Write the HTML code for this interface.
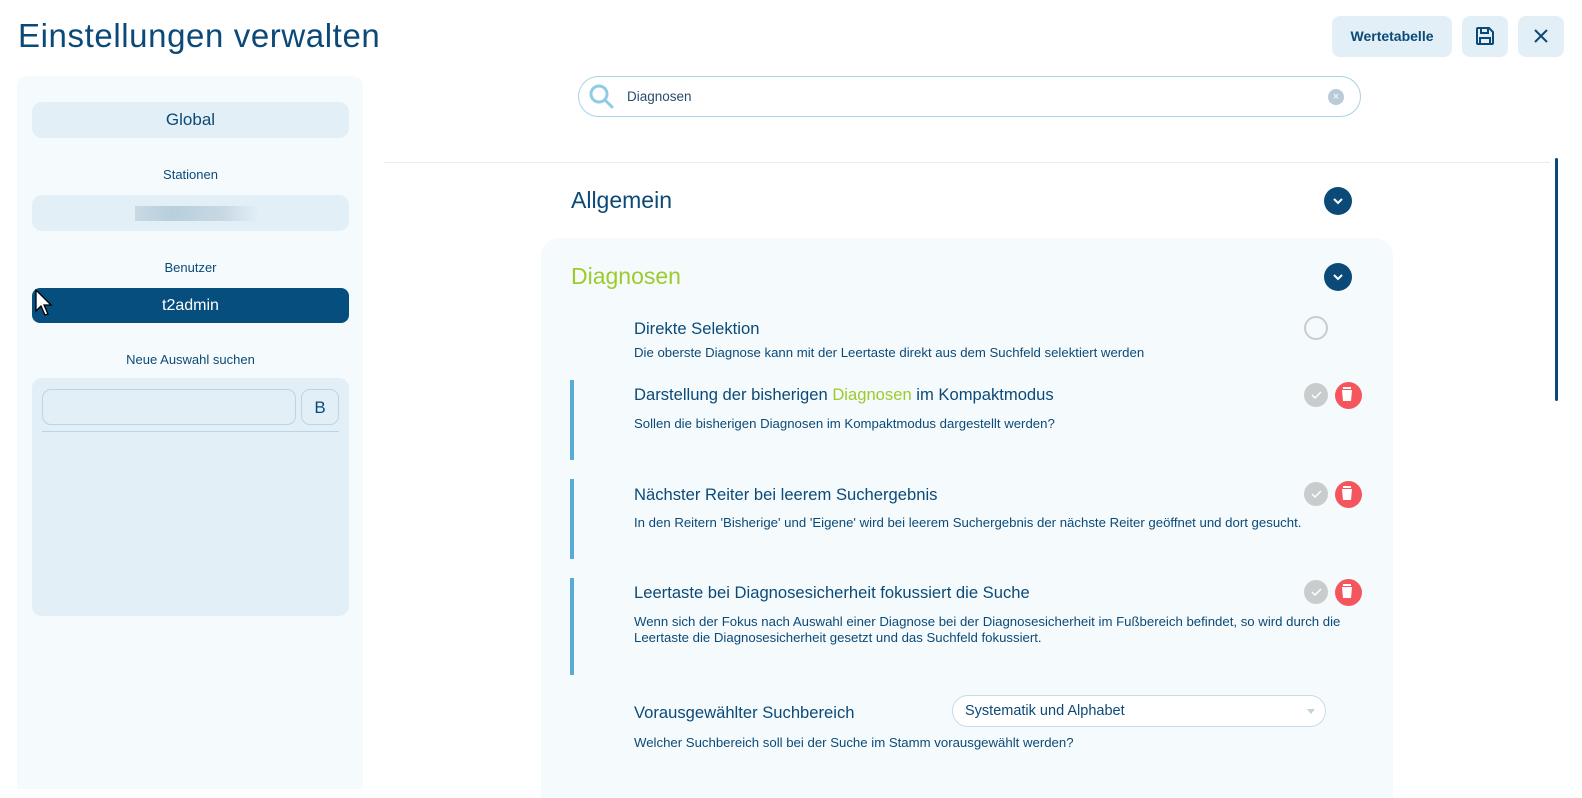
<!DOCTYPE html>
<html><head><meta charset="utf-8"><style>
*{box-sizing:border-box;margin:0;padding:0}
body{width:1582px;height:789px;overflow:hidden;background:#fff;font-family:"Liberation Sans",sans-serif;color:#0b4a78;position:relative}
.a{position:absolute}
.btn{background:#e3eff6;border-radius:8px}
.t{white-space:nowrap}
.h{font-size:16.6px}
.d{font-size:13.2px}
.bar{position:absolute;left:570px;width:4px;background:#5aaad6}
.chk{width:24px;height:24px;border-radius:50%;background:#c9cccd}
.del{width:27px;height:27px;border-radius:50%;background:#f5565e}
.chev{width:28px;height:28px;border-radius:50%;background:#0b4a78}
</style></head><body>
<div class="a t" style="left:18px;top:17px;font-size:33px;letter-spacing:0.6px;color:#0b4a78">Einstellungen verwalten</div>
<div class="a btn t" style="left:1332px;top:16px;width:120px;height:41px;font-size:14px;font-weight:bold;line-height:41px;text-align:center">Wertetabelle</div>
<div class="a btn" style="left:1462px;top:16px;width:46px;height:41px">
<svg class="a" style="left:13px;top:10px" width="20" height="20" viewBox="0 0 20 20" fill="none" stroke="#0b4a78" stroke-width="2"><path d="M2 3a1 1 0 0 1 1-1h11l4 4v11a1 1 0 0 1-1 1H3a1 1 0 0 1-1-1z"/><path d="M6 2v5h7V2M5 18v-6h10v6"/></svg></div>
<div class="a btn" style="left:1518px;top:16px;width:46px;height:41px">
<svg class="a" style="left:15px;top:12px" width="16" height="16" viewBox="0 0 16 16" stroke="#0b4a78" stroke-width="2"><path d="M2 2l12 12M14 2L2 14"/></svg></div>

<div class="a" style="left:17px;top:76px;width:346px;height:713px;background:#f5fafd;border-radius:10px 10px 0 0"></div>
<div class="a btn t" style="left:32px;top:102px;width:317px;height:36px;border-radius:10px;text-align:center;line-height:36px;font-size:17px">Global</div>
<div class="a t" style="left:32px;top:167px;width:317px;text-align:center;font-size:13px">Stationen</div>
<div class="a btn" style="left:32px;top:195px;width:317px;height:36px;border-radius:10px"></div>
<div class="a" style="left:135px;top:206px;width:124px;height:15px;background:linear-gradient(90deg,#c8d9e4,#b9cfdc 30%,#c7d8e3 70%,#e3eff6)"></div>
<div class="a t" style="left:32px;top:260px;width:317px;text-align:center;font-size:13px">Benutzer</div>
<div class="a t" style="left:32px;top:288px;width:317px;height:35px;border-radius:8px;background:#064e7e;color:#fff;text-align:center;line-height:35px;font-size:16px">t2admin</div>
<svg class="a" style="left:35px;top:289px" width="18" height="28" viewBox="0 0 18 28"><path d="M1 1v21l5-5 4 9 3-1-4-9h7z" fill="#fff" stroke="#000" stroke-width="1.3"/></svg>
<div class="a t" style="left:32px;top:352px;width:317px;text-align:center;font-size:13px">Neue Auswahl suchen</div>
<div class="a" style="left:32px;top:378px;width:317px;height:238px;background:#e3eff6;border-radius:10px"></div>
<div class="a" style="left:42px;top:389px;width:254px;height:36px;border:1px solid #bcd5e4;border-radius:9px"></div>
<div class="a t" style="left:301px;top:389px;width:38px;height:36px;border:1px solid #bcd5e4;border-radius:9px;text-align:center;line-height:36px;font-size:17px">B</div>
<div class="a" style="left:42px;top:431px;width:297px;height:1px;background:#bcd5e4"></div>

<div class="a" style="left:578px;top:76px;width:783px;height:41px;border:1px solid #a7d3e8;border-radius:21px"></div>
<svg class="a" style="left:588px;top:83px" width="28" height="28" viewBox="0 0 28 28" fill="none" stroke="#8fcbe5" stroke-width="3"><circle cx="11" cy="11" r="8"/><path d="M17 17l7 7" stroke-linecap="round"/></svg>
<div class="a t" style="left:627px;top:89px;font-size:13.5px;color:#2a4c6e">Diagnosen</div>
<div class="a" style="left:1328px;top:89px;width:16px;height:16px;border-radius:50%;background:#b9cbd9;color:#fff;font-size:11px;text-align:center;line-height:16px">×</div>
<div class="a" style="left:384px;top:162px;width:1166px;height:1px;background:#e4eef4"></div>
<div class="a" style="left:1555px;top:158px;width:3px;height:243px;background:#0b4a78;border-radius:2px"></div>

<div class="a t" style="left:571px;top:187px;font-size:23px">Allgemein</div>
<div class="a chev" style="left:1324px;top:187px"><svg width="28" height="28" viewBox="0 0 28 28" fill="none" stroke="#fff" stroke-width="2"><path d="M10 12l4 4 4-4"/></svg></div>

<div class="a" style="left:541px;top:238px;width:852px;height:560px;background:#f5fafd;border-radius:18px 18px 0 0"></div>
<div class="a t" style="left:571px;top:263px;font-size:23px;color:#9ccb2c">Diagnosen</div>
<div class="a chev" style="left:1324px;top:263px"><svg width="28" height="28" viewBox="0 0 28 28" fill="none" stroke="#fff" stroke-width="2"><path d="M10 12l4 4 4-4"/></svg></div>

<div class="a t h" style="left:634px;top:319px">Direkte Selektion</div>
<div class="a t d" style="left:634px;top:345px">Die oberste Diagnose kann mit der Leertaste direkt aus dem Suchfeld selektiert werden</div>
<div class="a" style="left:1304px;top:316px;width:24px;height:24px;border-radius:50%;border:2px solid #c9cccd"></div>

<div class="bar" style="top:380px;height:80px"></div>
<div class="a t h" style="left:634px;top:385px">Darstellung der bisherigen <span style="color:#9ccb2c">Diagnosen</span> im Kompaktmodus</div>
<div class="a t d" style="left:634px;top:416px">Sollen die bisherigen Diagnosen im Kompaktmodus dargestellt werden?</div>

<div class="bar" style="top:479px;height:80px"></div>
<div class="a t h" style="left:634px;top:485px">Nächster Reiter bei leerem Suchergebnis</div>
<div class="a t d" style="left:634px;top:515px">In den Reitern 'Bisherige' und 'Eigene' wird bei leerem Suchergebnis der nächste Reiter geöffnet und dort gesucht.</div>

<div class="bar" style="top:578px;height:97px"></div>
<div class="a t h" style="left:634px;top:583px">Leertaste bei Diagnosesicherheit fokussiert die Suche</div>
<div class="a d" style="left:634px;top:614px;width:735px;line-height:16px">Wenn sich der Fokus nach Auswahl einer Diagnose bei der Diagnosesicherheit im Fußbereich befindet, so wird durch die Leertaste die Diagnosesicherheit gesetzt und das Suchfeld fokussiert.</div>

<div class="a chk" style="left:1304px;top:383px"></div><div class="a del" style="left:1335px;top:382px"></div>
<div class="a chk" style="left:1304px;top:482px"></div><div class="a del" style="left:1335px;top:481px"></div>
<div class="a chk" style="left:1304px;top:580px"></div><div class="a del" style="left:1335px;top:579px"></div>
<svg class="a" style="left:1304px;top:380px" width="60" height="230" viewBox="0 0 60 230">
<g fill="none" stroke="#fff" stroke-width="1.5"><path d="M8 15l3 3 6-6"/><path d="M8 114l3 3 6-6"/><path d="M8 212l3 3 6-6"/></g>
<g fill="#fff"><path d="M39 7h8v2h-8zM38 10h10l-1 11h-8z"/><path d="M39 106h8v2h-8zM38 109h10l-1 11h-8z"/><path d="M39 204h8v2h-8zM38 207h10l-1 11h-8z"/></g></svg>

<div class="a t h" style="left:634px;top:703px">Vorausgewählter Suchbereich</div>
<div class="a" style="left:952px;top:695px;width:374px;height:32px;border:1px solid #c8dce8;border-radius:16px;background:#fff"></div>
<div class="a t" style="left:965px;top:703px;font-size:14.5px">Systematik und Alphabet</div>
<div class="a" style="left:1307px;top:709px;width:0;height:0;border-left:4px solid transparent;border-right:4px solid transparent;border-top:5px solid #c4d2dc"></div>
<div class="a t d" style="left:634px;top:735px">Welcher Suchbereich soll bei der Suche im Stamm vorausgewählt werden?</div>
</body></html>
